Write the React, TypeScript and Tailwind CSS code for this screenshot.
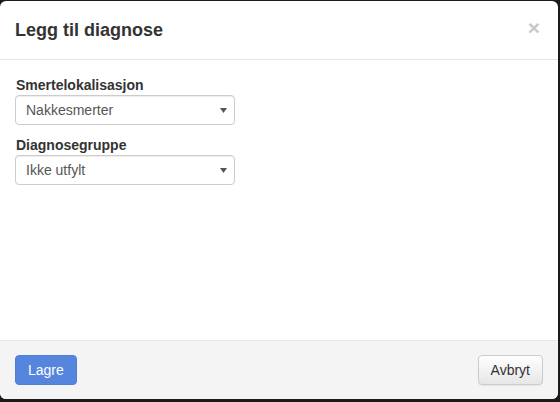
import React from "react";

function SelectBox({ value }: { value: string }) {
  return (
    <div className="flex h-[30px] w-[220px] items-center justify-between rounded-[4px] border border-[#ccc] bg-white pl-[10px] pr-[7px] text-[14px] text-[#555] shadow-[inset_0_1px_1px_rgba(0,0,0,0.075)]">
      <span>{value}</span>
      <svg width="7" height="5" viewBox="0 0 7 5">
        <path d="M0 0 H7 L3.5 5 Z" fill="#555" />
      </svg>
    </div>
  );
}

export default function App() {
  return (
    <div
      className="h-[402px] w-[560px] bg-[#1b1b1b] pt-[1px] pb-[3px] pr-[2px]"
      style={{ fontFamily: '"Liberation Sans", Arial, sans-serif' }}
    >
      <div className="flex h-full flex-col overflow-hidden rounded-[6px] bg-white">
        <div className="flex items-start justify-between border-b border-[#e5e5e5] px-[15px] pt-[15px] pb-[15px]">
          <h4 className="text-[18px] font-bold leading-[28px] text-[#333]">Legg til diagnose</h4>
          <span className="mt-[-2px] mr-[3px] text-[21px] font-bold leading-[28px] text-[#c8c8c8]">×</span>
        </div>
        <div className="flex-1 px-[15px] pt-[16px]">
          <label className="block pl-[1px] text-[14px] font-bold leading-[19px] text-[#333]">Smertelokalisasjon</label>
          <SelectBox value="Nakkesmerter" />
          <label className="mt-[11px] block pl-[1px] text-[14px] font-bold leading-[19px] text-[#333]">Diagnosegruppe</label>
          <SelectBox value="Ikke utfylt" />
        </div>
        <div className="flex items-center justify-between border-t border-[#e5e5e5] bg-[#f4f4f4] px-[15px] pt-[14px] pb-[14px]">
          <button className="h-[30px] rounded-[4px] border border-[#4e7fd6] bg-[#5585dc] px-[12px] text-[14px] text-white">
            Lagre
          </button>
          <button className="h-[30px] rounded-[4px] border border-[#ccc] bg-gradient-to-b from-white to-[#e6e6e6] px-[12px] text-[14px] text-[#333] shadow-[0_1px_1px_rgba(0,0,0,0.06)]">
            Avbryt
          </button>
        </div>
      </div>
    </div>
  );
}
